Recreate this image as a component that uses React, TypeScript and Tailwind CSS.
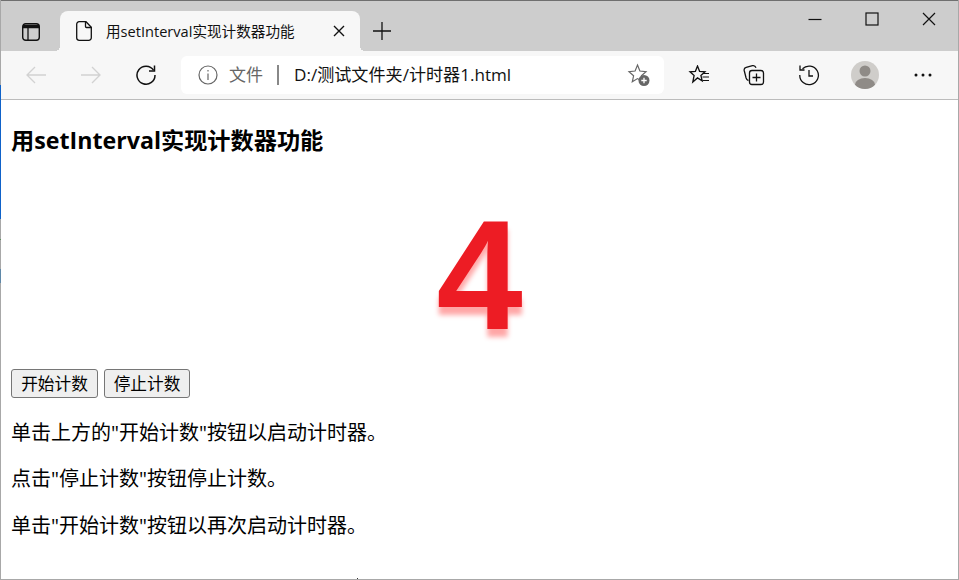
import React from "react";

const cjk = "font-['Open_Sans','Noto_Sans_CJK_SC',sans-serif]";

function S({ w = 20, h = 20, children, className = "" }: { w?: number; h?: number; children: React.ReactNode; className?: string }) {
  return (
    <svg width={w} height={h} viewBox={`0 0 ${w} ${h}`} fill="none" stroke="currentColor" strokeWidth={1.2} className={className}>
      {children}
    </svg>
  );
}

export default function App() {
  return (
    <div className={`relative w-[959px] h-[580px] flex flex-col overflow-hidden bg-white ${cjk} pl-[1px] border-r border-b border-[#a8a8a8]`}>
      {/* desktop showing through the window's left edge */}
      <div className="absolute left-0 top-0 w-[1px] h-full bg-[linear-gradient(to_bottom,#a8a8a8_85px,#0f62c9_85px,#0f62c9_219px,#a8a8a8_219px,#a8a8a8_239px,#5c8f5c_239px,#5c8f5c_240px,#a8a8a8_240px,#a8a8a8_269px,#5f88a8_269px,#5f88a8_283px,#a8a8a8_283px)]" />
      <div className="absolute left-[357px] bottom-0 w-[1px] h-[1px] bg-[#333]" />
      {/* tab strip */}
      <div className="h-[51px] shrink-0 bg-[#cdcdcd] border-t border-[#6f6f6f] flex items-end">
        <div className="w-[59px] h-10 flex items-center justify-center pt-[1px] pl-[1px] text-[#111]">
          <S w={18} h={18}>
            <rect x="0.700" y="0.700" width="16.600" height="16.600" rx="3" strokeWidth="1.400" />
            <path d="M1 3.500h16" strokeWidth="3.500" />
            <path d="M6 5v12" strokeWidth="1.300" />
          </S>
        </div>
        <div className="relative w-[300px] h-10 bg-[#f7f7f7] rounded-t-lg flex items-center text-[#111]">
          <div className="absolute left-[-5px] bottom-0 w-[5px] h-[5px] bg-[radial-gradient(circle_at_0_0,transparent_5px,#f7f7f7_5px)]" />
          <div className="absolute right-[-5px] bottom-0 w-[5px] h-[5px] bg-[radial-gradient(circle_at_100%_0,transparent_5px,#f7f7f7_5px)]" />
          <div className="ml-[16px] w-[16px] flex justify-center">
            <S w={16} h={20}>
              <path d="M0.700 3.200a2.500 2.500 0 0 1 2.500-2.500h6.800l5.300 5.500v10.600a2.500 2.500 0 0 1-2.500 2.500h-9.600a2.500 2.500 0 0 1-2.500-2.500z" strokeWidth="1.300" />
              <path d="M9.500 1v4.500a1 1 0 0 0 1 1h5" strokeWidth="1.300" />
            </S>
          </div>
          <span className="ml-[14px] text-[14.6px] leading-5 w-[213px] whitespace-nowrap">用setInterval实现计数器功能</span>
          <div className="ml-[14px]">
            <S w={12} h={12}>
              <path d="M1 1l10 10M11 1L1 11" strokeWidth="1.400" />
            </S>
          </div>
        </div>
        <div className="w-[44px] h-10 flex items-center justify-center text-[#111]">
          <S w={18} h={18}>
            <path d="M9 0v18M0 9h18" strokeWidth="1.300" />
          </S>
        </div>
        <div className="flex-1" />
        <div className="self-start h-[36px] flex items-center text-[#111]">
          <div className="w-[56px] flex justify-center pr-[2px]">
            <S w={14} h={14}>
              <path d="M0.500 7.500h13" />
            </S>
          </div>
          <div className="w-[56px] flex justify-center pr-[1px]">
            <S w={14} h={14}>
              <rect x="1" y="1" width="12" height="12" />
            </S>
          </div>
          <div className="w-[58px] flex justify-center">
            <S w={14} h={14}>
              <path d="M1 1l12 12M13 1L1 13" />
            </S>
          </div>
        </div>
      </div>
      {/* toolbar */}
      <div className="h-[49px] shrink-0 bg-[#f7f7f7] border-b border-[#bcbcbc] flex items-center">
        <div className="w-[70px] flex justify-center text-[#d2d2d2]">
          <S w={22} h={20}>
            <path d="M21 10H2M10 2l-8 8 8 8" strokeWidth="1.300" />
          </S>
        </div>
        <div className="w-[40px] flex justify-center text-[#d2d2d2]">
          <S w={22} h={20}>
            <path d="M1 10h19M12 2l8 8-8 8" strokeWidth="1.300" />
          </S>
        </div>
        <div className="w-[70px] flex justify-center text-[#111]">
          <S w={22} h={22}>
            <path d="M18.500 6.200A9 9 0 1 0 20 11" strokeWidth="1.500" />
            <path d="M19.500 1.500v5.500h-5.500" strokeWidth="1.500" />
          </S>
        </div>
        <div className="w-[483px] h-[38px] mb-[1px] bg-white rounded-md flex items-center">
          <div className="ml-[17px] text-[#666]">
            <S w={20} h={20}>
              <circle cx="10" cy="10" r="9" strokeWidth="1.200" />
              <path d="M10 8.500v6.500M10 5v1.600" strokeWidth="1.200" />
            </S>
          </div>
          <span className="ml-[11px] text-[17px] text-[#666] leading-5">文件</span>
          <span className="ml-[14px] w-[2px] h-[20px] bg-[#888]" />
          <span className="ml-[15px] text-[17.1px] text-[#111] leading-5 whitespace-nowrap flex-1">D:/测试文件夹/计时器1.html</span>
          <div className="mr-[13px] text-[#666]">
            <S w={24} h={24}>
              <path d="M10.500 2l2.400 6 6.100.6-4.600 4.200 1.300 6-5.200-3.200-5.200 3.200 1.300-6-4.600-4.200 6.100-.6z" />
              <circle cx="17" cy="17.500" r="5.500" fill="#666" stroke="none" />
              <path d="M17 14.800v5.400M14.300 17.500h5.400" stroke="#fff" strokeWidth="1.300" />
            </S>
          </div>
        </div>
        <div className="w-[70px] flex justify-center text-[#111]">
          <S w={22} h={20}>
            <path d="M9.500 1l2.100 5.300 5.400.5-4.100 3.600 1.300 5.400-4.700-2.900-4.700 4.200 1.300-6.700-4.100-3.600 5.400-.5z" strokeWidth="1.300" />
            <path d="M15 8.500h6M14.500 12h6.500M14.500 15.500h6.500" strokeWidth="1.200" />
          </S>
        </div>
        <div className="w-[40px] flex justify-center text-[#111]">
          <S w={22} h={22}>
            <path d="M5.500 16.500c-1.200-.2-2-1.200-2.400-2.500L1.200 6.500C.9 5 1.700 3.700 3.200 3.300l6.300-1.600c1.500-.3 2.900.4 3.500 2" strokeWidth="1.300" />
            <rect x="6.500" y="6.500" width="14" height="14" rx="2.500" strokeWidth="1.300" />
            <path d="M13.500 9.500v8M9.500 13.500h8" strokeWidth="1.300" />
          </S>
        </div>
        <div className="w-[70px] flex justify-center text-[#111]">
          <S w={22} h={22}>
            <path d="M4.500 4.800A9.300 9.300 0 1 1 1.800 11" strokeWidth="1.300" />
            <path d="M2 1.500v4.500h4.500" strokeWidth="1.300" />
            <path d="M11 6v6h4" strokeWidth="1.300" />
          </S>
        </div>
        <div className="w-[28px] h-[28px] ml-[7px] mb-[1px] rounded-full bg-[#cfcdca] overflow-hidden">
          <svg width="28" height="28" viewBox="0 0 28 28">
            <circle cx="14" cy="10" r="5.500" fill="#8f8b87" />
            <ellipse cx="14" cy="23.500" rx="10" ry="6.500" fill="#8f8b87" />
          </svg>
        </div>
        <div className="ml-[35px] text-[#111] mb-[1px]">
          <svg width="18" height="4" viewBox="0 0 18 4" fill="currentColor" className="block">
            <circle cx="2" cy="2" r="1.500" />
            <circle cx="9" cy="2" r="1.500" />
            <circle cx="16" cy="2" r="1.500" />
          </svg>
        </div>
      </div>
      {/* page */}
      <div className="flex-1 px-[10px] text-black text-[20px] leading-[24px]">
        <h3 className="mt-[28px] font-bold text-[23.2px] leading-[24px]">用setInterval实现计数器功能</h3>
        <div className="mt-[33px] h-[182px] flex items-center justify-center text-[155px] leading-[182px] font-bold text-[#ed1c24] font-['Liberation_Sans'] [text-shadow:0_8px_5px_rgba(255,0,0,0.35)]">
          4
        </div>
        <div className="mt-[2px] flex gap-[6px]">
          <button className="h-[29px] w-[87px] pt-[1px] bg-[#efefef] border border-[#767676] rounded-[3px] text-[16.670px] leading-none text-black">开始计数</button>
          <button className="h-[29px] w-[86px] pt-[1px] bg-[#efefef] border border-[#767676] rounded-[3px] text-[16.670px] leading-none text-black">停止计数</button>
        </div>
        <p className="mt-[23px]">单击上方的"开始计数"按钮以启动计时器。</p>
        <p className="mt-[22px]">点击"停止计数"按钮停止计数。</p>
        <p className="mt-[23px]">单击"开始计数"按钮以再次启动计时器。</p>
      </div>
    </div>
  );
}
